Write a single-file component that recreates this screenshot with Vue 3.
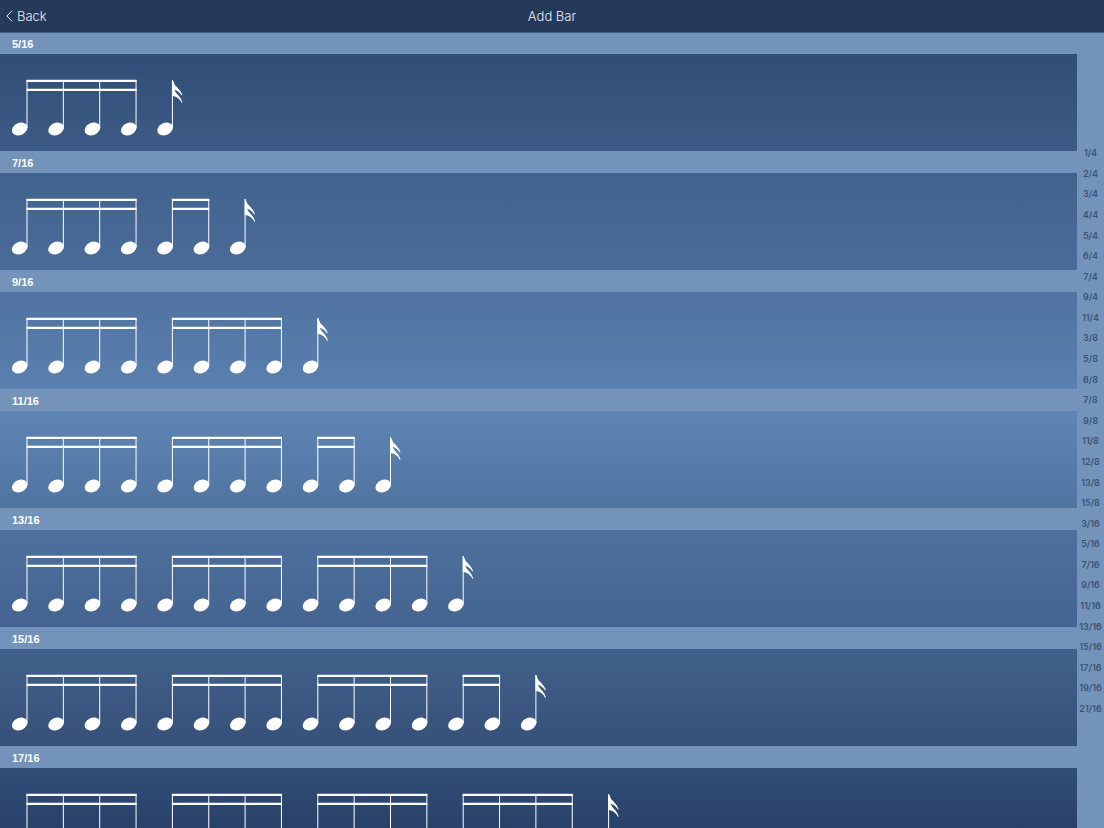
<script setup>
const STEP = 36.35
const notes = (groups) => {
  let n = 0
  return groups.map((size) => {
    const xs = Array.from({ length: size }, () => 20 + STEP * n++)
    return { single: size === 1, xs, from: xs[0] + 6.5, to: xs[size - 1] + 7.5 }
  })
}

const bars = [
  { name: '5/16', groups: [4, 1] },
  { name: '7/16', groups: [4, 2, 1] },
  { name: '9/16', groups: [4, 4, 1] },
  { name: '11/16', groups: [4, 4, 2, 1] },
  { name: '13/16', groups: [4, 4, 4, 1] },
  { name: '15/16', groups: [4, 4, 4, 2, 1] },
  { name: '17/16', groups: [4, 4, 4, 4, 1] }
].map((bar, i) => ({ ...bar, id: 'bar-' + bar.name.replace('/', '-'), tone: 'tone-' + (i + 1), beams: notes(bar.groups) }))

const index = [
  '1/4', '2/4', '3/4', '4/4', '5/4', '6/4', '7/4', '9/4', '11/4',
  '3/8', '5/8', '6/8', '7/8', '9/8', '11/8', '12/8', '13/8', '15/8',
  '3/16', '5/16', '7/16', '9/16', '11/16', '13/16', '15/16', '17/16', '19/16', '21/16'
]
</script>

<template>
  <div class="screen">
    <header class="navbar">
      <button class="back" type="button">
        <svg class="chevron" viewBox="0 0 7 12" aria-hidden="true"><path d="M6 0.7 1 6l5 5.3" /></svg>
        <span>Back</span>
      </button>
      <h1 class="title">Add Bar</h1>
      <span></span>
    </header>
    <div class="body">
      <main class="list">
        <section v-for="bar in bars" :id="bar.id" :key="bar.name" class="section">
          <h2 class="heading">{{ bar.name }}</h2>
          <button class="row" :class="bar.tone" type="button" :aria-label="'Add ' + bar.name + ' bar'">
            <svg class="score" width="660" height="97" viewBox="0 0 660 97" aria-hidden="true">
              <g v-for="(beam, b) in bar.beams" :key="b">
                <template v-for="x in beam.xs" :key="x">
                  <ellipse :cx="x - 0.3" cy="75" rx="8.2" ry="6" :transform="`rotate(-26 ${x - 0.3} 75)`" />
                  <path class="stem" :d="`M${x + 7} 26V74`" />
                </template>
                <path
                  v-if="!beam.single"
                  class="beam"
                  :d="`M${beam.from} 26.9H${beam.to}M${beam.from} 35.9H${beam.to}`"
                />
                <path
                  v-else
                  :transform="`translate(${beam.xs[0] + 6.6} 26)`"
                  d="M0 0H.8L3 5.3C5.2 7.6 8.6 10.2 10.4 14.9L9.8 15.6C8 12.6 6 11 2.4 9.4L3.8 12.6C6 15.2 8.9 17.4 10.4 22.2L9.8 22.9C7.8 18.8 5 16.6 .8 16H0Z"
                />
              </g>
            </svg>
          </button>
        </section>
      </main>
      <nav class="index" aria-label="Time signatures">
        <a v-for="item in index" :key="item" :href="'#bar-' + item.replace('/', '-')">{{ item }}</a>
      </nav>
    </div>
  </div>
</template>

<style>
body {
  overflow: hidden;
}
</style>

<style scoped>
.screen {
  display: flex;
  flex-direction: column;
  height: 100vh;
  overflow: hidden;
  background: #7393bb;
  font-family: Inter, "Liberation Sans", sans-serif;
}
.navbar {
  display: grid;
  grid-template-columns: 1fr auto 1fr;
  align-items: center;
  flex: none;
  height: 32px;
  padding: 0 6px;
  background: #253958;
  border-bottom: 1px solid #456087;
  color: #e9edf3;
}
.back {
  display: flex;
  align-items: center;
  justify-self: start;
  gap: 4px;
  padding: 0;
  border: 0;
  background: none;
  color: inherit;
  font: 300 13px/20px Inter, sans-serif;
}
.chevron {
  width: 7px;
  height: 12px;
  fill: none;
  stroke: currentColor;
}
.title {
  margin: 0;
  font: 300 13px/20px Inter, sans-serif;
}
.body {
  display: flex;
  flex: 1;
  min-height: 0;
}
.list {
  flex: 1;
  min-width: 0;
  overflow: hidden;
}
.heading {
  margin: 0;
  padding: 2px 0 0 12px;
  color: #fff;
  font: bold 11px/20px "Liberation Sans", sans-serif;
}
.section:first-child .heading {
  padding-top: 1px;
}
.row {
  display: block;
  width: 100%;
  padding: 0;
  border: 0;
  overflow: hidden;
}
.score {
  display: block;
  fill: #fff;
}
.stem {
  stroke: #fff;
  stroke-width: 1;
}
.beam {
  stroke: #fff;
  stroke-width: 2.4;
}
.tone-1 { background: linear-gradient(#304d76, #3d5b86); }
.tone-2 { background: linear-gradient(#41628c, #4b6c9a); }
.tone-3 { background: linear-gradient(#5073a0, #5a80b0); }
.tone-4 { background: linear-gradient(#5e85b4, #5074a0); }
.tone-5 { background: linear-gradient(#4e719c, #446391); }
.tone-6 { background: linear-gradient(#41618b, #365079); }
.tone-7 { background: linear-gradient(#304d76, #253a62); }
.index {
  display: flex;
  flex-direction: column;
  flex: none;
  width: 27px;
  margin: 110px 0 109px;
}
.index a {
  display: flex;
  flex: 1;
  align-items: center;
  justify-content: center;
  color: #3c5375;
  font-size: 9px;
  font-weight: 600;
  line-height: 12px;
  text-decoration: none;
}
</style>
